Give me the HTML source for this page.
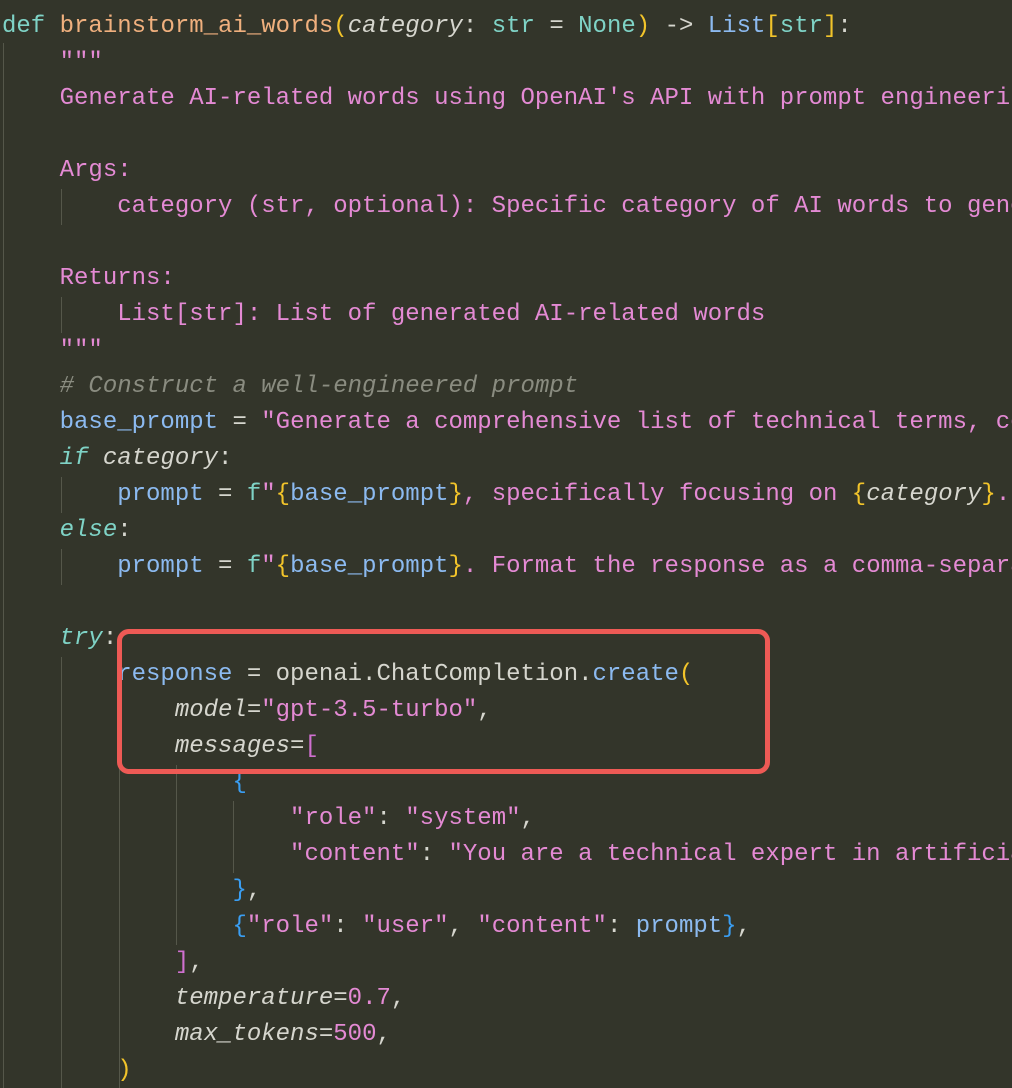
<!DOCTYPE html>
<html><head><meta charset="utf-8"><style>
html,body{margin:0;padding:0;background:#33352a;width:1012px;height:1088px;overflow:hidden}
.wrap{position:absolute;left:0;top:0;width:1012px;height:1088px;overflow:hidden}
pre{position:absolute;left:2px;top:9px;margin:0;font-family:"Liberation Mono","DejaVu Sans Mono",monospace;font-size:24px;line-height:36px;color:#d6d6ce;white-space:pre}
.k{color:#7fd3c6}.ki{color:#7fd3c6;font-style:italic}.f{color:#f0b07e}.s{color:#e48ad4}.v{color:#8cbaf0}.y{color:#f2c42a}.b{color:#3a9ef2}.c{color:#8a8c80;font-style:italic}.i{font-style:italic}.p{color:#d070d0}
.g{position:absolute;width:1px;background:#55574a}
.box{position:absolute;left:117px;top:629px;width:643px;height:135px;border:5px solid #ee5a55;border-radius:12px}
</style></head><body>
<div class="wrap">
<div class="g" style="left:3px;top:43px;height:1045px"></div>
<div class="g" style="left:61px;top:189px;height:36px"></div>
<div class="g" style="left:61px;top:297px;height:36px"></div>
<div class="g" style="left:61px;top:477px;height:36px"></div>
<div class="g" style="left:61px;top:549px;height:36px"></div>
<div class="g" style="left:61px;top:657px;height:431px"></div>
<div class="g" style="left:119px;top:765px;height:323px"></div>
<div class="g" style="left:176px;top:765px;height:180px"></div>
<div class="g" style="left:233px;top:801px;height:72px"></div>
<pre><span class="k">def</span> <span class="f">brainstorm_ai_words</span><span class="y">(</span><span class="i">category</span>: <span class="k">str</span> = <span class="k">None</span><span class="y">)</span> -&gt; <span class="v">List</span><span class="y">[</span><span class="k">str</span><span class="y">]</span>:
    <span class="s">"""</span>
<span class="s">    Generate AI-related words using OpenAI's API with prompt engineering.</span>

<span class="s">    Args:</span>
<span class="s">        category (str, optional): Specific category of AI words to generate</span>

<span class="s">    Returns:</span>
<span class="s">        List[str]: List of generated AI-related words</span>
<span class="s">    """</span>
    <span class="c"># Construct a well-engineered prompt</span>
    <span class="v">base_prompt</span> = <span class="s">"Generate a comprehensive list of technical terms, concepts</span>
    <span class="ki">if</span> <span class="i">category</span>:
        <span class="v">prompt</span> = <span class="k">f</span><span class="s">"</span><span class="y">{</span><span class="v">base_prompt</span><span class="y">}</span><span class="s">, specifically focusing on </span><span class="y">{</span><span class="i">category</span><span class="y">}</span><span class="s">. Format</span>
    <span class="ki">else</span>:
        <span class="v">prompt</span> = <span class="k">f</span><span class="s">"</span><span class="y">{</span><span class="v">base_prompt</span><span class="y">}</span><span class="s">. Format the response as a comma-separated</span>

    <span class="ki">try</span>:
        <span class="v">response</span> = openai.ChatCompletion.<span class="v">create</span><span class="y">(</span>
            <span class="i">model</span>=<span class="s">"gpt-3.5-turbo"</span>,
            <span class="i">messages</span>=<span class="p">[</span>
                <span class="b">{</span>
                    <span class="s">"role"</span>: <span class="s">"system"</span>,
                    <span class="s">"content"</span>: <span class="s">"You are a technical expert in artificial</span>
                <span class="b">}</span>,
                <span class="b">{</span><span class="s">"role"</span>: <span class="s">"user"</span>, <span class="s">"content"</span>: <span class="v">prompt</span><span class="b">}</span>,
            <span class="p">]</span>,
            <span class="i">temperature</span>=<span class="s">0.7</span>,
            <span class="i">max_tokens</span>=<span class="s">500</span>,
        <span class="y">)</span></pre>
<div class="box"></div>
</div>
</body></html>
